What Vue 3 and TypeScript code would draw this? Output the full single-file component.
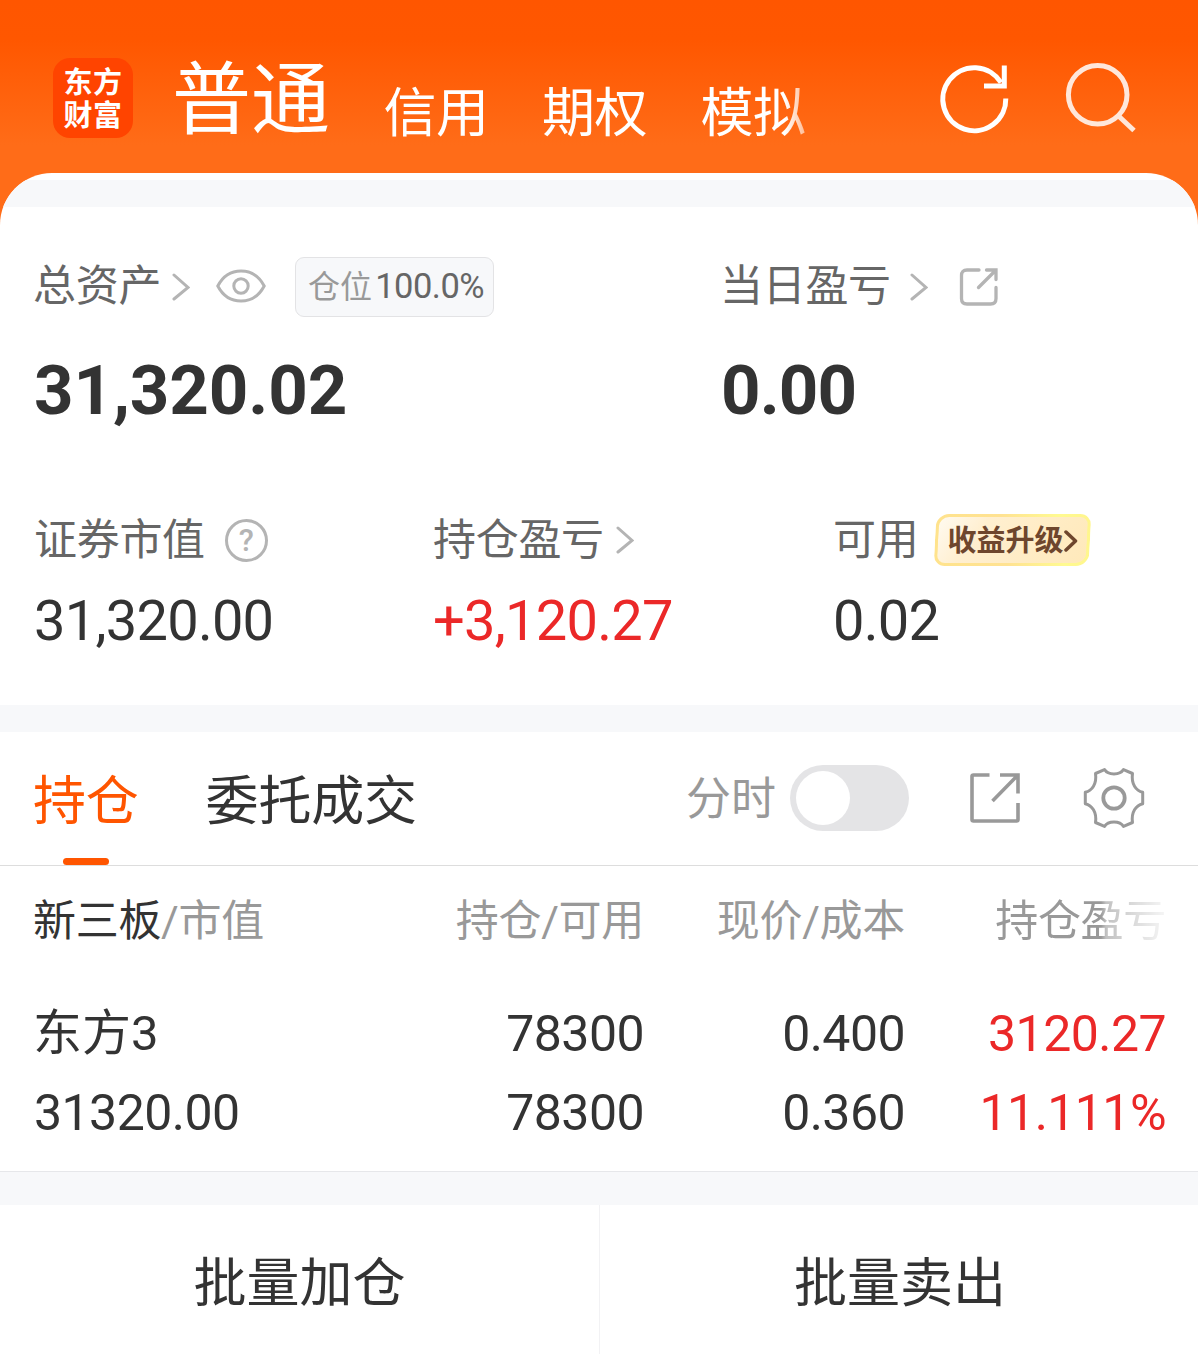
<script setup lang="ts">
interface Holding {
  name: string
  marketValue: string
  quantity: string
  available: string
  price: string
  cost: string
  profit: string
  ratio: string
}

const accountTabs: string[] = ['信用', '期权', '模拟']

const holdings: Holding[] = [
  {
    name: '东方3',
    marketValue: '31320.00',
    quantity: '78300',
    available: '78300',
    price: '0.400',
    cost: '0.360',
    profit: '3120.27',
    ratio: '11.111%',
  },
]
</script>

<template>
  <div class="page">
    <header class="topbar">
      <div class="logo"><span>东方</span><span>财富</span></div>
      <nav class="accounts">
        <span class="account current">普通</span>
        <span v-for="tab in accountTabs" :key="tab" class="account">{{ tab }}</span>
      </nav>
      <svg class="refresh" width="76" height="76" viewBox="0 0 76 76" fill="none" stroke="#fff" stroke-width="5">
        <path d="M69.8 37.5A31.5 31.5 0 1 1 65 21.5" />
        <path d="M68.3 4.5V25H48" />
      </svg>
      <svg class="search" width="76" height="76" viewBox="0 0 76 76" fill="none" stroke="#ffe7da" stroke-width="5">
        <circle cx="35.7" cy="33.7" r="29.3" />
        <path d="M56 54.5L72 69.5" />
      </svg>
    </header>

    <main class="sheet">
      <div class="strip"></div>
      <section class="assets">
        <div class="row primary-labels">
          <div class="cell total">
            <span class="label">总资产</span>
            <svg class="chev" width="18" height="28" viewBox="0 0 18 28"><path d="M2 2L16 14.5L2 26" /></svg>
            <svg class="eye" width="50" height="36" viewBox="0 0 50 36" fill="none" stroke="#b4b4b4" stroke-width="3">
              <path d="M1.8 18C7 8 15 3 25 3S43 8 48.2 18C43 28 35 33 25 33S7 28 1.8 18Z" />
              <circle cx="25" cy="18" r="7.2" />
            </svg>
            <span class="position">仓位<b>100.0%</b></span>
          </div>
          <div class="cell">
            <span class="label">当日盈亏</span>
            <svg class="chev day" width="18" height="28" viewBox="0 0 18 28"><path d="M2 2L16 14.5L2 26" /></svg>
            <svg class="share" width="40" height="40" viewBox="0 0 40 40" fill="none" stroke="#b4b4b4" stroke-width="3.3" stroke-linecap="round">
              <path d="M20 3H8Q2.5 3 2.5 8.5V31.5Q2.500 37 8 37H31.5Q37 37 37 31.5V20.5" />
              <path d="M27.5 3H37V12.500M36.5 3.500L19.5 20.500" />
            </svg>
          </div>
        </div>
        <div class="row primary-values">
          <div class="cell total">31,320.02</div>
          <div class="cell today">0.00</div>
        </div>
        <div class="row secondary-labels">
          <div class="cell third first">
            <span class="label">证券市值</span>
            <span class="help">?</span>
          </div>
          <div class="cell third">
            <span class="label">持仓盈亏</span>
            <svg class="chev hold" width="18" height="28" viewBox="0 0 18 28"><path d="M2 2L16 14.5L2 26" /></svg>
          </div>
          <div class="cell">
            <span class="label">可用</span>
            <span class="upgrade">
              <span>收益升级</span>
              <svg width="14" height="22" viewBox="0 0 14 22"><path d="M2 2L11.5 11L2 20" /></svg>
            </span>
          </div>
        </div>
        <div class="row secondary-values">
          <div class="cell third first">31,320.00</div>
          <div class="cell third up">+3,120.27</div>
          <div class="cell">0.02</div>
        </div>
      </section>

      <div class="gap"></div>

      <section class="tabs">
        <div class="tab active">持仓</div>
        <div class="tab">委托成交</div>
        <div class="tools">
          <span class="minute">分时</span>
          <span class="switch"><i></i></span>
          <svg class="export" width="52" height="52" viewBox="0 0 52 52" fill="none" stroke="#999" stroke-width="3.6">
            <path d="M20.5 3H4.500Q3 3 3 4.500V47.500Q3 49 4.500 49H47.500Q49 49 49 47.500V31" />
            <path d="M31 3H49V21.500M48.500 3.500L23.500 29" />
          </svg>
          <svg class="gear" width="62" height="62" viewBox="0 0 62 62" fill="none" stroke="#999" stroke-width="3" stroke-linejoin="round">
            <path d="M12.500 6.500L21.500 2.600C25 8.500 37 8.500 40.500 2.600L49.500 6.500C48 17 53 23.500 59.700 25.300V36.700C53 38.500 48 45 49.500 55.500L40.500 59.400C37 53.500 25 53.500 21.500 59.400L12.500 55.500C14 45 9 38.500 2.300 36.700V25.300C9 23.500 14 17 12.500 6.500Z" />
            <circle cx="31" cy="31" r="10.700" stroke-width="3.800" />
          </svg>
        </div>
      </section>

      <section class="table">
        <div class="line head">
          <span class="c1"><em>新三板</em>/市值</span>
          <span class="c2">持仓/可用</span>
          <span class="c3">现价/成本</span>
          <span class="c4 fade">持仓盈亏</span>
        </div>
        <div v-for="item in holdings" :key="item.name" class="holding">
          <div class="line">
            <span class="c1 name">{{ item.name }}</span>
            <span class="c2">{{ item.quantity }}</span>
            <span class="c3">{{ item.price }}</span>
            <span class="c4 up">{{ item.profit }}</span>
          </div>
          <div class="line">
            <span class="c1">{{ item.marketValue }}</span>
            <span class="c2">{{ item.available }}</span>
            <span class="c3">{{ item.cost }}</span>
            <span class="c4 up">{{ item.ratio }}</span>
          </div>
        </div>
      </section>

      <div class="gap bottom"></div>

      <footer class="actions">
        <div class="action">批量加仓</div>
        <div class="action">批量卖出</div>
      </footer>
    </main>
  </div>
</template>

<style>
body {
  margin: 0;
}
</style>

<style scoped>
.page {
  width: 1198px;
  height: 1354px;
  overflow: hidden;
  background: linear-gradient(#ff5600 0, #ff5700 40px, #ff6c18 145px, #ff6c18 230px);
  font-family: Roboto, 'Noto Sans CJK SC', sans-serif;
  color: #333;
  white-space: nowrap;
}
.page * {
  box-sizing: border-box;
}
svg {
  display: block;
  flex: none;
}
.topbar {
  display: flex;
  align-items: flex-start;
  height: 173px;
  color: #fff;
}
.logo {
  display: flex;
  flex-direction: column;
  align-items: center;
  width: 80px;
  height: 80px;
  margin: 58px 0 0 53px;
  padding-top: 9px;
  border-radius: 17px;
  background: #ff4400;
  font-size: 29px;
  font-weight: 700;
  line-height: 33px;
  letter-spacing: 0.5px;
}
.accounts {
  display: flex;
  width: 762px;
  padding-left: 39px;
  mask-image: linear-gradient(90deg, #000 652px, transparent 697px);
}
.account {
  margin: 74px 0 0 53.5px;
  font-size: 53px;
  line-height: 80px;
  letter-spacing: -0.5px;
}
.account.current {
  margin: 51px 0 0;
  font-size: 79px;
  line-height: 100px;
  letter-spacing: 0;
}
.refresh {
  margin: 61px 0 0 41px;
}
.search {
  margin: 61px 0 0 50px;
}
.sheet {
  height: 1181px;
  overflow: hidden;
  border-radius: 52px 52px 0 0;
  background: #fff;
}
.strip {
  height: 27px;
  margin-top: 7px;
  background: #f7f8fa;
}
.assets {
  height: 498px;
  padding: 50px 0 0 34px;
}
.row {
  display: flex;
}
.cell {
  display: flex;
  align-items: center;
}
.cell.total {
  width: 687px;
}
.cell.third {
  width: 400px;
}
.cell.third.first {
  width: 399px;
}
.label {
  height: 60px;
  margin-left: -1px;
  font-size: 43px;
  line-height: 60px;
  letter-spacing: -0.3px;
  color: #666;
}
.primary-labels .label {
  line-height: 59px;
}
.secondary-labels .label {
  margin-left: 0;
  line-height: 61px;
}
.chev {
  margin-left: 11px;
  fill: none;
  stroke: #b4b4b4;
  stroke-width: 3;
  stroke-linecap: round;
}
.chev.day {
  margin-left: 19px;
}
.chev.hold {
  margin-left: 12px;
}
.eye {
  margin: 0 0 3px 26px;
}
.position {
  width: 199px;
  height: 60px;
  margin-left: 29px;
  padding-left: 12px;
  border: 1px solid #e3e3e5;
  border-radius: 9px;
  background: #f7f8fa;
  font-size: 32px;
  line-height: 57px;
  color: #999;
}
.position b {
  margin-left: 3px;
  font-size: 34.5px;
  font-weight: 400;
  letter-spacing: -0.5px;
  color: #666;
}
.share {
  margin-left: 31px;
}
.primary-labels {
  height: 60px;
}
.primary-values {
  height: 80px;
  margin-top: 34px;
  font-size: 69px;
  font-weight: 700;
  line-height: 80px;
  letter-spacing: -0.1px;
}
.primary-values .today {
  letter-spacing: -0.9px;
}
.secondary-labels {
  height: 60px;
  margin-top: 79px;
}
.help {
  width: 43px;
  height: 43px;
  margin-left: 20px;
  border: 3px solid #b4b4b4;
  border-radius: 50%;
  font-size: 31px;
  font-weight: 500;
  line-height: 38px;
  text-align: center;
  color: #b4b4b4;
}
.upgrade {
  position: relative;
  z-index: 0;
  display: flex;
  align-items: center;
  width: 157px;
  height: 52px;
  margin-left: 16px;
  padding: 1px 0 0 13px;
  font-size: 29px;
  font-weight: 700;
  line-height: 52px;
  color: #6e462d;
}
.upgrade::before {
  position: absolute;
  inset: 0 1px;
  z-index: -1;
  border: 3px solid transparent;
  border-radius: 13px 11px 13px 11px;
  background:
    linear-gradient(125deg, #fffaf0 0, #ffefd0 28%, #ffe9ba 100%) padding-box,
    linear-gradient(80deg, #ffe38c 0, #ffe292 45%, #fffa91 80%, #fff58c 100%) border-box;
  transform: skewX(-3deg);
  content: '';
}
.upgrade svg {
  margin-left: 1px;
  fill: none;
  stroke: #6e462d;
  stroke-width: 3.5;
  stroke-linecap: round;
  stroke-linejoin: round;
}
.secondary-values {
  height: 60px;
  margin-top: 21px;
  font-size: 56px;
  line-height: 60px;
  letter-spacing: -0.75px;
}
.up {
  color: #eb2828;
}
.gap {
  height: 27px;
  background: #f7f8fa;
}
.gap.bottom {
  height: 34px;
  border-top: 1px solid #e6e7ea;
}
.tabs {
  display: flex;
  height: 134px;
  padding-left: 33px;
  border-bottom: 1px solid #ddd;
}
.tab {
  height: 133px;
  margin-right: 67px;
  font-size: 53px;
  line-height: 141px;
  letter-spacing: -0.2px;
}
.tab.active {
  color: #ff5500;
}
.tab.active::after {
  display: block;
  width: 46px;
  height: 7px;
  margin: -15px auto 0;
  border-radius: 4px;
  background: #ff5500;
  content: '';
}
.tools {
  display: flex;
  align-items: center;
  height: 132px;
  margin-left: auto;
}
.minute {
  padding-top: 4px;
  font-size: 45px;
  line-height: 60px;
  color: #999;
}
.switch {
  display: flex;
  align-items: center;
  width: 119px;
  height: 66px;
  margin-left: 14px;
  padding-left: 6px;
  border-radius: 33px;
  background: #e4e4e6;
}
.switch i {
  width: 54px;
  height: 54px;
  border-radius: 50%;
  background: #fff;
}
.export {
  margin-left: 60px;
}
.gear {
  margin: 0 53px 0 62px;
}
.table {
  height: 305px;
  padding: 15px 0 0 34px;
}
.line {
  display: flex;
  height: 80px;
  font-size: 50px;
  line-height: 80px;
  letter-spacing: -0.55px;
}
.line:last-child {
  line-height: 79px;
}
.line span {
  flex: none;
  text-align: right;
}
.line .c1 {
  width: 340px;
  text-align: left;
}
.line .c2 {
  width: 270px;
}
.line .c3 {
  width: 261px;
}
.line .c4 {
  width: 261px;
}
.line .name {
  margin-left: -1px;
  width: 341px;
  font-size: 49px;
  letter-spacing: 0;
}
.line.head {
  font-size: 43px;
  line-height: 80px;
  letter-spacing: -0.3px;
  color: #999;
}
.head .c1 {
  margin-left: -1px;
  width: 341px;
}
.head em {
  font-style: normal;
  color: #333;
}
.head .fade {
  mask-image: linear-gradient(90deg, #000 196px, rgba(0, 0, 0, 0.6) 201px, rgba(0, 0, 0, 0.12) 256px);
}
.holding {
  margin-top: 33px;
}
.actions {
  display: flex;
  height: 149px;
}
.action {
  flex: none;
  width: 600px;
  font-size: 53px;
  line-height: 158px;
  text-align: center;
}
.action:first-child {
  border-right: 1px solid #f2f2f4;
}
</style>
